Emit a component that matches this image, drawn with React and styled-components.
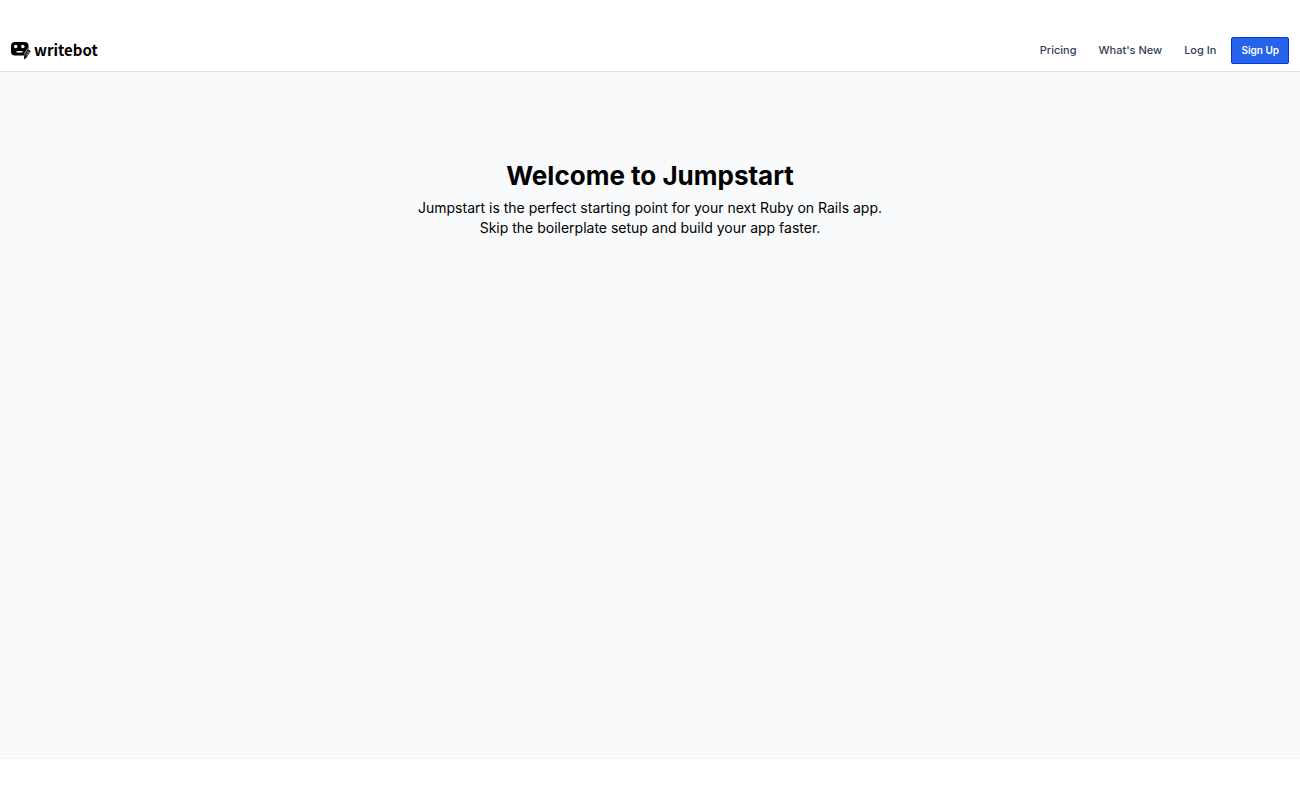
import React from 'react'
import styled, { createGlobalStyle } from 'styled-components'

const GlobalStyle = createGlobalStyle`
	*, *::before, *::after {
		box-sizing: border-box;
	}

	body {
		background: #fff;
		color: #000;
		font-family: Inter, "Liberation Sans", sans-serif;
		margin: 0;
	}
`

const Page = styled.div`
	display: flex;
	flex-direction: column;
	min-height: 100vh;
	padding: 29px 0;
`

const Header = styled.header`
	align-items: center;
	background: #fff;
	border-bottom: 1px solid #dfe1e4;
	display: flex;
	justify-content: space-between;
	padding: 8px 11px 7px;
`

const Brand = styled.a`
	align-items: center;
	color: #000;
	display: flex;
	font-family: "Noto Sans CJK SC", "Noto Sans", sans-serif;
	font-size: 15px;
	font-weight: 700;
	gap: 3px;
	line-height: 20px;
	padding-bottom: 2px;
	text-decoration: none;
`

const Nav = styled.nav`
	align-items: center;
	display: flex;
`

const NavLink = styled.a`
	color: #334155;
	font-size: 11px;
	font-weight: 500;
	line-height: 16px;
	padding: 4px 11px 6px;
	text-decoration: none;
`

const SignUp = styled.button`
	background: #2563eb;
	border: 1px solid #0038e0;
	border-radius: 2px;
	color: #fff;
	cursor: pointer;
	font: 600 10px/15px Inter, "Liberation Sans", sans-serif;
	margin-left: 4px;
	padding: 5px 9px;
`

const Main = styled.main`
	background: #f8fafc;
	border-bottom: 1px solid #f3f5f7;
	flex: 1;
	padding: 86px 16px;
	text-align: center;
`

const Title = styled.h1`
	font-size: 26px;
	font-weight: 700;
	line-height: 36px;
	margin: 0 0 4px;
`

const Lead = styled.p`
	font-size: 14px;
	line-height: 20px;
	margin: 0;
`

const LogoIcon = () => (
	<svg width="20" height="20" viewBox="0 0 20 20" aria-hidden="true">
		<rect y="2" width="17.5" height="13.5" rx="4" fill="#000" />
		<circle cx="4.7" cy="6.5" r="1.7" fill="#fff" />
		<circle cx="11.8" cy="6.5" r="1.7" fill="#fff" />
		<path d="M5.500 11.800h6" stroke="#fff" strokeWidth="1.5" />
		<path fill="#fff" d="M16.500 8.500L20 10.500V20h-7v-6z" />
		<path fill="#000" d="M16.800 9l3 2.200-4.200 6.200-2.600 2.300.300-5.500z" />
		<path
			fill="none"
			stroke="#fff"
			strokeWidth=".4"
			d="M14.300 15.800l3.500-5M15.400 16.600l3.500-5M15.600 11l3 2M14.300 13l3 2"
		/>
	</svg>
)

const App = () => (
	<Page>
		<GlobalStyle />
		<Header>
			<Brand href="#">
				<LogoIcon />
				writebot
			</Brand>
			<Nav>
				<NavLink href="#pricing">Pricing</NavLink>
				<NavLink href="#whats-new">What's New</NavLink>
				<NavLink href="#login">Log In</NavLink>
				<SignUp type="button">Sign Up</SignUp>
			</Nav>
		</Header>
		<Main>
			<Title>Welcome to Jumpstart</Title>
			<Lead>
				Jumpstart is the perfect starting point for your next Ruby on Rails app.
				<br />
				Skip the boilerplate setup and build your app faster.
			</Lead>
		</Main>
	</Page>
)

export default App
